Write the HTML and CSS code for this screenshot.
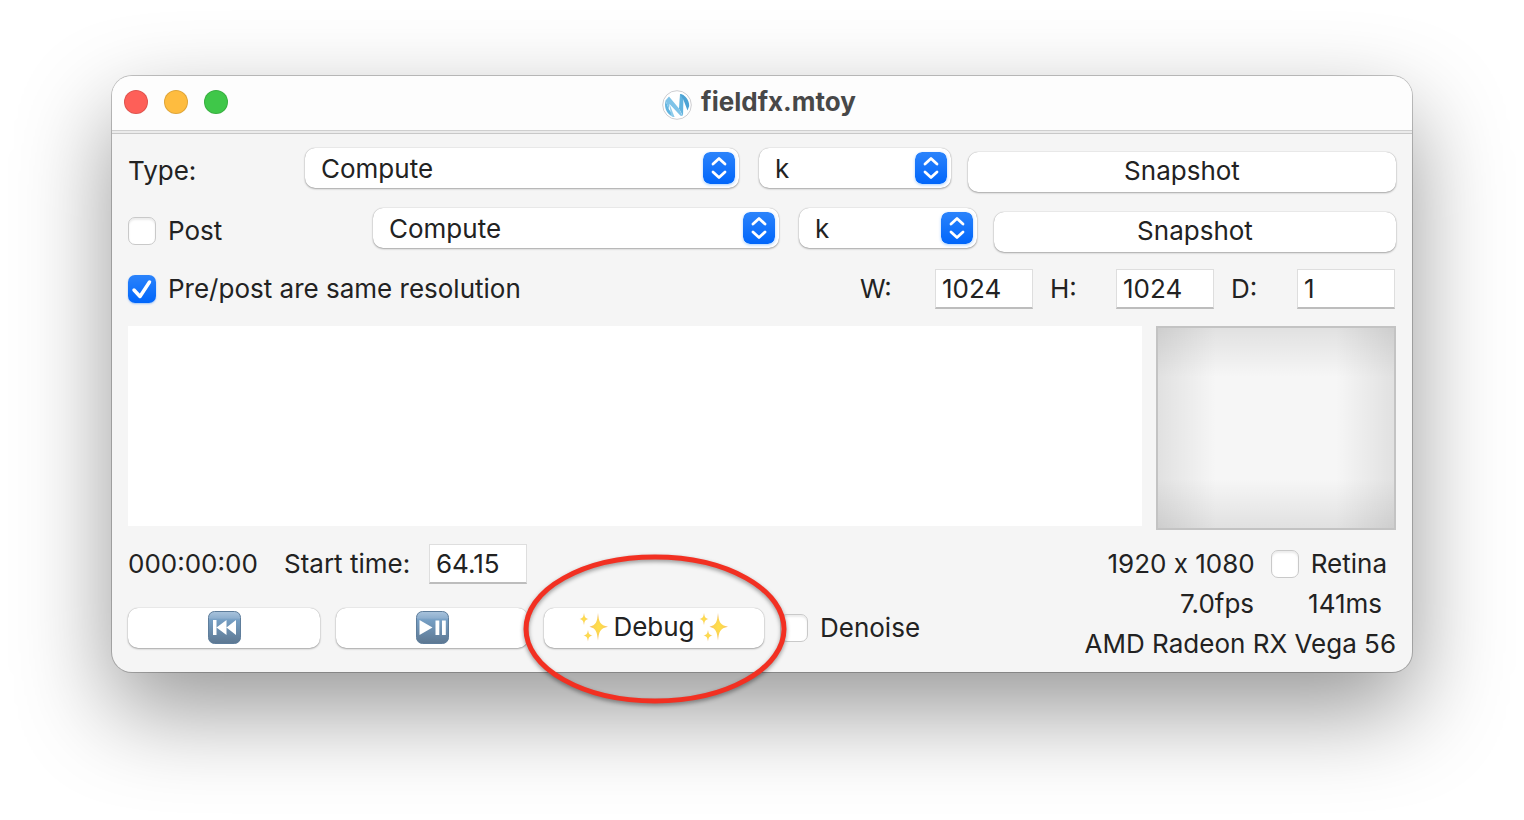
FILE: index.html
```html
<!DOCTYPE html>
<html lang="en">
<head>
<meta charset="utf-8">
<title>fieldfx.mtoy</title>
<link rel="stylesheet" href="styles.css">
</head>
<body>
<svg class="defs" aria-hidden="true">
  <defs>
    <linearGradient id="blue" x1="0" y1="0" x2="0" y2="1"><stop offset="0" stop-color="#2b83fb"/><stop offset="1" stop-color="#0066fb"/></linearGradient>
    <linearGradient id="steel" x1="0" y1="0" x2="0" y2="1"><stop offset="0" stop-color="#a9c3dc"/><stop offset=".2" stop-color="#8fb0cf"/><stop offset=".26" stop-color="#769fc4"/><stop offset="1" stop-color="#5d7791"/></linearGradient>
    <radialGradient id="gold"><stop offset="0" stop-color="#ffe04a"/><stop offset=".6" stop-color="#fbd254"/><stop offset="1" stop-color="#f0b070"/></radialGradient>
    <symbol id="updown" viewBox="0 0 32 32">
      <rect width="32" height="32" rx="7" fill="url(#blue)"/>
      <path d="M10 12 16 6.500l6 5.500M10 20 16 25.500l6-5.500" fill="none" stroke="#fff" stroke-width="2.800" stroke-linecap="round" stroke-linejoin="round"/>
    </symbol>
    <symbol id="sparkles" viewBox="0 0 30 30">
      <g fill="url(#gold)">
        <path d="M19 1C19.900 10 21 13.300 29 14.700C21 16.200 19.900 20 19 28.500C18.100 20 17 16.200 10.500 14.700C17 13.300 18.100 10 19 1Z"/>
        <path d="M5 1C5.600 5 6.200 6.200 9.500 7C6.200 7.900 5.600 9 5 13C4.400 9 3.800 7.900 .5 7C3.800 6.200 4.400 5 5 1Z"/>
        <path d="M9 18C9.600 21.700 10.200 22.700 13.500 23.500C10.200 24.400 9.600 25.400 9 29.500C8.400 25.400 7.800 24.400 4.500 23.500C7.800 22.700 8.400 21.700 9 18Z"/>
      </g>
    </symbol>
  </defs>
</svg>

<main class="window">
  <header class="titlebar">
    <div class="lights">
      <button class="light light-close" aria-label="Close"></button>
      <button class="light light-minimise" aria-label="Minimise"></button>
      <button class="light light-zoom" aria-label="Zoom"></button>
    </div>
    <h1 class="title">
      <svg class="logo" viewBox="0 0 30 30" aria-hidden="true">
        <circle cx="15" cy="15" r="14.300" fill="#fff" stroke="#c8c8cc" stroke-width=".9"/>
        <path d="M3 14.500 3.500 10.500 7 19.500 12.500 27C7 26 3 21 3 14.500Z" fill="#62b4df"/>
        <path d="M3.500 10.500 7 6.500 17 18.500 20.500 26 18.500 25.800 7.500 14 7 19.500Z" fill="#7fc3e8"/>
        <path d="M7.500 14 12.500 27 9 26Z" fill="#8fcbea"/>
        <path d="M17 18.500 18 4 21.500 5 21 26Z" fill="#62b4df"/>
        <path d="M18 4C23 4.500 27.400 10 27.200 16L25.500 20.500 21.500 10Z" fill="#4da3d4"/>
      </svg>
      <span>fieldfx.mtoy</span>
    </h1>
  </header>

  <div class="content">
    <div class="row">
      <label class="lead lead-type" for="type">Type:</label>
      <span class="popup type-main"><select id="type"><option>Compute</option></select><svg class="arrows" aria-hidden="true"><use href="#updown"/></svg></span>
      <span class="popup popup-small type-kernel"><select aria-label="Kernel"><option>k</option></select><svg class="arrows" aria-hidden="true"><use href="#updown"/></svg></span>
      <button class="push type-snap">Snapshot</button>
    </div>

    <div class="row">
      <label class="lead lead-post check"><input type="checkbox">Post</label>
      <span class="popup post-main"><select aria-label="Post type"><option>Compute</option></select><svg class="arrows" aria-hidden="true"><use href="#updown"/></svg></span>
      <span class="popup popup-small post-kernel"><select aria-label="Post kernel"><option>k</option></select><svg class="arrows" aria-hidden="true"><use href="#updown"/></svg></span>
      <button class="push post-snap">Snapshot</button>
    </div>

    <div class="row row-size">
      <label class="check"><input type="checkbox" checked>Pre/post are same resolution</label>
      <div class="sizes">
        <label class="size" for="w">W:</label><input class="field" id="w" type="text" value="1024">
        <label class="size" for="h">H:</label><input class="field" id="h" type="text" value="1024">
        <label class="size" for="d">D:</label><input class="field" id="d" type="text" value="1">
      </div>
    </div>

    <div class="panes">
      <textarea class="code" aria-label="Messages"></textarea>
      <div class="preview"></div>
    </div>

    <div class="bottom">
      <div class="controls">
        <div class="time">
          <span class="clock">000:00:00</span>
          <label class="start" for="start">Start time:</label><input class="field" id="start" type="text" value="64.15">
        </div>
        <div class="transport">
          <button class="push" aria-label="Rewind">
            <svg class="glyph" viewBox="0 0 33 33"><rect x=".5" y=".5" width="32" height="32" rx="6" fill="url(#steel)" stroke="#5e7d9b"/><path d="M5 9h3.500v15H5zM8.500 16.500 18.500 9v15zM18.500 16.500 28 9v15z" fill="#fff"/></svg>
          </button>
          <button class="push" aria-label="Play or pause">
            <svg class="glyph" viewBox="0 0 33 33"><rect x=".5" y=".5" width="32" height="32" rx="6" fill="url(#steel)" stroke="#5e7d9b"/><path d="M3.500 9 16.500 16.500 3.500 24zM19.500 9.500h3.800v14.500h-3.800zM26 9.500h3.800v14.500H26z" fill="#fff"/></svg>
          </button>
          <div class="highlight">
            <button class="push push-debug">
              <svg class="spark" aria-hidden="true"><use href="#sparkles"/></svg><span>Debug</span><svg class="spark" aria-hidden="true"><use href="#sparkles"/></svg>
            </button>
            <svg class="ring" viewBox="0 0 264 150" aria-hidden="true"><ellipse cx="132" cy="75" rx="129" ry="72" fill="none" stroke="#f23022" stroke-width="5"/></svg>
          </div>
          <label class="check"><input type="checkbox">Denoise</label>
        </div>
      </div>
      <div class="stats">
        <div class="stat stat-size"><span class="resolution">1920 x 1080</span><label class="check"><input type="checkbox">Retina</label></div>
        <div class="stat stat-rate"><span>7.0fps</span><span>141ms</span></div>
        <div class="stat">AMD Radeon RX Vega 56</div>
      </div>
    </div>
  </div>
</main>
</body>
</html>
```
FILE: styles.css
```css
* { box-sizing: border-box; }

body {
  min-height: 100vh;
  margin: 0;
  padding: 76px 112px;
  background: #fff;
  color: #222;
  font: 26px/40px Inter, "Liberation Sans", sans-serif;
}

button, input, select, textarea {
  margin: 0;
  border: 0;
  color: inherit;
  font: inherit;
}

.defs { position: absolute; width: 0; height: 0; }

.window {
  border-radius: 20px;
  background: #f5f5f5;
  box-shadow: 0 0 0 1px rgba(0, 0, 0, .22), 0 38px 94px rgba(0, 0, 0, .41);
}

.titlebar {
  display: grid;
  grid-template-columns: 1fr auto 1fr;
  align-items: center;
  height: 58px;
  padding: 0 12px 5px;
  border-bottom: 1px solid #c8c8c8;
  border-radius: 20px 20px 0 0;
  background: linear-gradient(#fdfdfd 54px, #cfcfcf 54px, #cfcfcf 55px, #ebebeb 55px);
}

.lights { display: flex; gap: 16px; }
.light {
  width: 24px;
  height: 24px;
  padding: 0;
  border: 1px solid rgba(0, 0, 0, .12);
  border-radius: 50%;
}
.light-close { background: #fe5f58; }
.light-minimise { background: #febc3f; }
.light-zoom { background: #3fc749; }

.title {
  display: flex;
  align-items: center;
  gap: 9px;
  margin: 0;
  padding-right: 6px;
  color: #484848;
  font-size: 26px;
  font-weight: 700;
}
.logo { width: 30px; height: 30px; margin-top: 6px; }

.content { padding: 14px 16px 8px; }

.row {
  display: flex;
  align-items: flex-start;
  margin-bottom: 16px;
}

.lead { padding-top: 3px; }
.lead-type { width: 177px; }
.lead-post { width: 245px; }

.check {
  display: flex;
  align-items: center;
  gap: 12px;
}
.check input {
  flex: none;
  width: 28px;
  height: 28px;
  border: 1px solid #c9c9c9;
  border-radius: 7px;
  background: #fff;
  box-shadow: inset 0 2px 2px rgba(0, 0, 0, .08);
  appearance: none;
}
.check input:checked {
  border: 0;
  background: url("data:image/svg+xml,%3Csvg xmlns='http://www.w3.org/2000/svg' viewBox='0 0 28 28'%3E%3Cpath d='M6 15l6 6.500L21.500 7' fill='none' stroke='white' stroke-width='3.500' stroke-linecap='round' stroke-linejoin='round'/%3E%3C/svg%3E"), linear-gradient(#2b83fb, #0066fb);
  box-shadow: 0 1px 2px rgba(0, 110, 255, .35);
}

.popup { position: relative; margin-right: 20px; }
.popup-small { margin-right: 17px; }
.popup select {
  display: block;
  width: 100%;
  height: 40px;
  padding: 1px 48px 0 16px;
  border-radius: 10px;
  background: #fff;
  box-shadow: 0 0 1px rgba(0, 0, 0, .35), 0 1px 2px rgba(0, 0, 0, .3);
  appearance: none;
}
.arrows {
  position: absolute;
  top: 4px;
  right: 4px;
  width: 32px;
  height: 32px;
  border-radius: 7px;
  box-shadow: 0 1px 3px rgba(0, 120, 255, .35);
  pointer-events: none;
}

.push {
  display: flex;
  align-items: center;
  justify-content: center;
  height: 40px;
  padding: 0 0 2px;
  border-radius: 10px;
  background: #fff;
  box-shadow: 0 0 1px rgba(0, 0, 0, .35), 0 1px 2px rgba(0, 0, 0, .3);
}
.row .push { margin-top: 4px; }

.type-main { flex: 434 1 0; }
.type-kernel { flex: 192 1 0; }
.type-snap { flex: 428 1 0; }
.post-main { flex: 406 1 0; }
.post-kernel { flex: 178 1 0; }
.post-snap { flex: 402 1 0; }

.row-size {
  align-items: center;
  justify-content: space-between;
  height: 42px;
}
.sizes { display: flex; padding-right: 1px; }
.size { width: 66px; }
.size:first-child { width: 75px; }
.field {
  width: 98px;
  height: 40px;
  padding: 0 6px;
  border: 1px solid #dedede;
  border-bottom: 2px solid #bdbdbd;
  background: #fff;
}
.sizes .field:not(:last-child) { margin-right: 17px; }

.panes { display: flex; gap: 14px; }
.code {
  flex: 1;
  height: 200px;
  background: #fff;
  resize: none;
}
.preview {
  width: 240px;
  height: 204px;
  border: 2px solid #c3c3c3;
  background:
    linear-gradient(90deg, rgba(0, 0, 0, .09), transparent 25%, transparent 75%, rgba(0, 0, 0, .09)) border-box,
    linear-gradient(rgba(0, 0, 0, .09), transparent 25%, transparent 75%, rgba(0, 0, 0, .09)) border-box,
    #f6f6f6;
}

.bottom {
  display: flex;
  justify-content: space-between;
  margin-top: 14px;
}
.controls { display: flex; flex-direction: column; gap: 24px; }
.time { display: flex; }
.clock { width: 156px; }
.start { width: 145px; }

.transport { display: flex; gap: 16px; }
.transport .push { width: 192px; }
.transport .push-debug { gap: 4px; width: 220px; }
.glyph { width: 33px; height: 33px; }
.spark { width: 30px; height: 30px; }
.highlight { position: relative; }
.ring {
  position: absolute;
  z-index: 1;
  top: -54px;
  left: -21px;
  width: 264px;
  height: 150px;
  filter: drop-shadow(0 2px 2px rgba(0, 0, 0, .4));
  pointer-events: none;
}

.stats { text-align: right; }
.stat { white-space: nowrap; }
.stat-size { display: flex; justify-content: flex-end; gap: 16px; padding-right: 9px; }
.stat-rate { display: flex; justify-content: flex-end; gap: 54px; padding-right: 14px; }
.resolution { font-feature-settings: "calt" 0; }
```
